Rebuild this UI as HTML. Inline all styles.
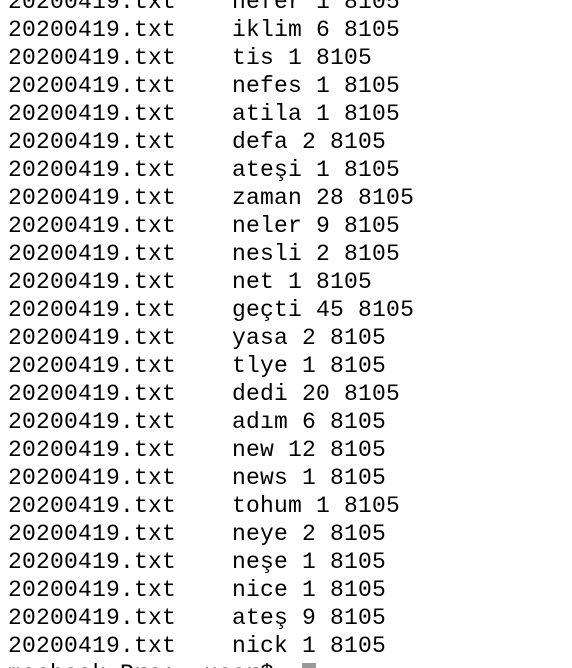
<!DOCTYPE html>
<html><head><meta charset="utf-8"><style>
html,body{margin:0;padding:0;background:#fff;width:572px;height:668px;overflow:hidden;position:relative}
pre{position:absolute;left:8px;top:-12px;margin:0;font-family:"Liberation Mono",monospace;font-size:23px;line-height:28px;letter-spacing:0.2px;color:#000}
.cur{display:inline-block;width:14px;height:22px;background:#999;vertical-align:-5px}
</style></head><body><pre>20200419.txt    nefer 1 8105
20200419.txt    iklim 6 8105
20200419.txt    tis 1 8105
20200419.txt    nefes 1 8105
20200419.txt    atila 1 8105
20200419.txt    defa 2 8105
20200419.txt    ateşi 1 8105
20200419.txt    zaman 28 8105
20200419.txt    neler 9 8105
20200419.txt    nesli 2 8105
20200419.txt    net 1 8105
20200419.txt    geçti 45 8105
20200419.txt    yasa 2 8105
20200419.txt    tlye 1 8105
20200419.txt    dedi 20 8105
20200419.txt    adım 6 8105
20200419.txt    new 12 8105
20200419.txt    news 1 8105
20200419.txt    tohum 1 8105
20200419.txt    neye 2 8105
20200419.txt    neşe 1 8105
20200419.txt    nice 1 8105
20200419.txt    ateş 9 8105
20200419.txt    nick 1 8105
macbook-Pro:~ user$  <span class="cur"></span></pre></body></html>
